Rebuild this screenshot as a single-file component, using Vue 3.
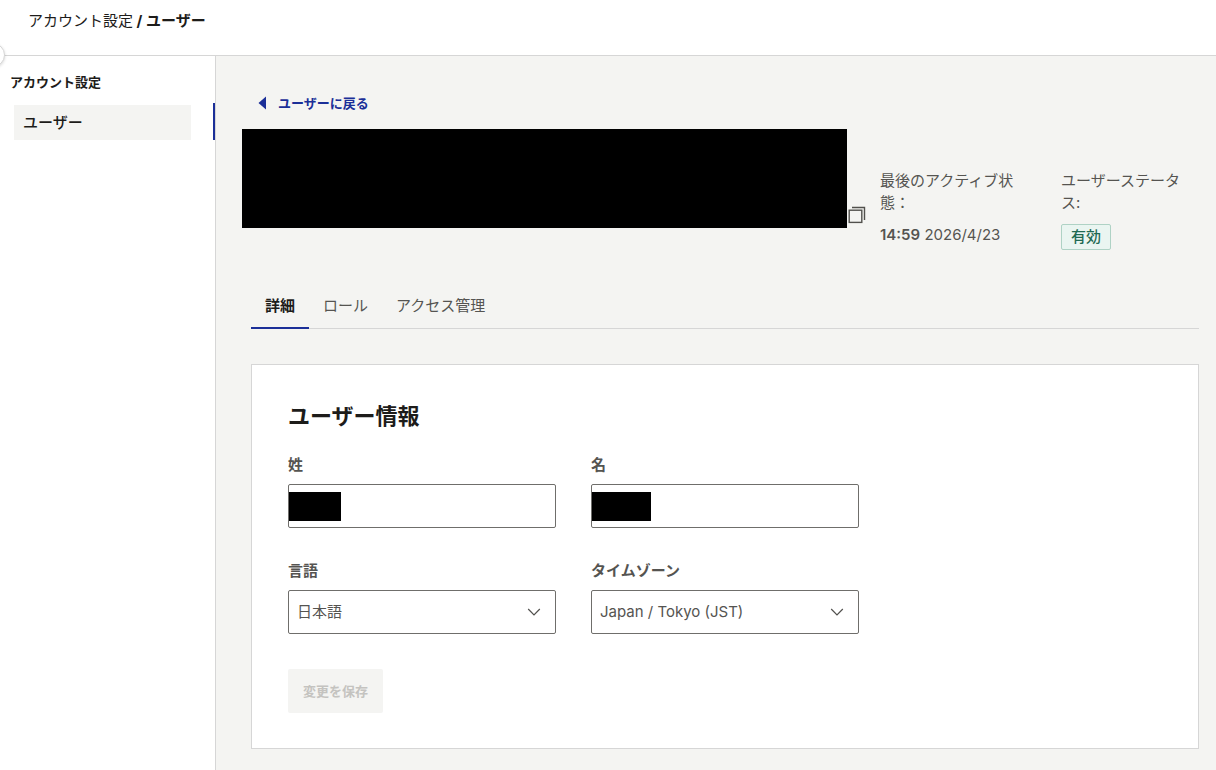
<template>
  <div class="page">
    <header class="topbar">
      <nav class="breadcrumb" aria-label="breadcrumb">
        <a href="#">アカウント設定</a>
        <strong> / ユーザー</strong>
      </nav>
      <button class="collapse" type="button" aria-label="メニュー"></button>
    </header>

    <div class="body">
      <aside class="sidebar">
        <h2 class="sidebar-title">アカウント設定</h2>
        <div class="sidebar-row">
          <a class="sidebar-item" href="#">ユーザー</a>
        </div>
      </aside>

      <main class="main">
        <a class="back" href="#">
          <svg width="8" height="14" viewBox="0 0 8 14">
            <path d="M8 0.5V13.5L0.5 7Z" fill="#1b2f98" />
          </svg>
          ユーザーに戻る
        </a>

        <section class="summary">
          <div class="name-block"></div>
          <button class="copy" type="button" aria-label="コピー">
            <svg width="18" height="18" viewBox="0 0 18 18" fill="none" stroke="#51504d" stroke-width="1.4">
              <rect x="1.2" y="4.2" width="12.6" height="12.2" />
              <path d="M4 1.5H16.5V14" />
            </svg>
          </button>
          <dl class="meta meta-active">
            <dt>最後のアクティブ状態：</dt>
            <dd><b>14:59</b> 2026/4/23</dd>
          </dl>
          <dl class="meta meta-status">
            <dt>ユーザーステータス:</dt>
            <dd><span class="badge">有効</span></dd>
          </dl>
        </section>

        <div class="tabs" role="tablist">
          <button
            v-for="tab in tabs"
            :key="tab"
            type="button"
            role="tab"
            class="tab"
            :class="{ active: tab === activeTab }"
            :aria-selected="tab === activeTab"
            @click="activeTab = tab"
          >{{ tab }}</button>
        </div>

        <form class="card" @submit.prevent>
          <h1>ユーザー情報</h1>
          <div class="fields">
            <div class="field">
              <label for="last-name">姓</label>
              <div class="control">
                <input id="last-name" v-model="lastName" type="text">
                <span class="mask"></span>
              </div>
            </div>
            <div class="field">
              <label for="first-name">名</label>
              <div class="control">
                <input id="first-name" v-model="firstName" type="text">
                <span class="mask mask-wide"></span>
              </div>
            </div>
            <div class="field">
              <label for="language">言語</label>
              <div class="control">
                <select id="language" v-model="language">
                  <option>日本語</option>
                </select>
                <svg class="chevron" width="14" height="8" viewBox="0 0 14 8">
                  <path d="M1.2 1L7 6.8L12.8 1" fill="none" stroke="#51504d" stroke-width="1.2" />
                </svg>
              </div>
            </div>
            <div class="field">
              <label for="timezone">タイムゾーン</label>
              <div class="control">
                <select id="timezone" v-model="timezone">
                  <option>Japan / Tokyo (JST)</option>
                </select>
                <svg class="chevron" width="14" height="8" viewBox="0 0 14 8">
                  <path d="M1.2 1L7 6.8L12.8 1" fill="none" stroke="#51504d" stroke-width="1.2" />
                </svg>
              </div>
            </div>
          </div>
          <button class="save" type="submit" disabled>変更を保存</button>
        </form>
      </main>
    </div>
  </div>
</template>

<script setup>
import { ref } from 'vue'

const tabs = ['詳細', 'ロール', 'アクセス管理']
const activeTab = ref('詳細')

const lastName = ref('')
const firstName = ref('')
const language = ref('日本語')
const timezone = ref('Japan / Tokyo (JST)')
</script>

<style>
body {
  background: #f4f4f2;
}
</style>

<style scoped>
.page {
  min-height: 100vh;
  display: flex;
  flex-direction: column;
  font-family: Inter, "Noto Sans CJK JP", sans-serif;
  font-size: 15px;
  line-height: 22px;
  color: #555451;
}

.page * {
  box-sizing: border-box;
}

a {
  color: inherit;
  text-decoration: none;
}

button,
input,
select {
  font: inherit;
  color: inherit;
}

button {
  border: 0;
  padding: 0;
  background: none;
}

.topbar {
  position: relative;
  height: 56px;
  padding: 10px 28px;
  background: #fff;
  border-bottom: 1px solid #d6d6d6;
  color: #1d1c1a;
}

.collapse {
  position: absolute;
  left: -19px;
  bottom: -12px;
  width: 24px;
  height: 24px;
  border: 1px solid #d6d6d6;
  border-radius: 50%;
  background: #fff;
  box-shadow: 0 1px 3px rgba(0, 0, 0, 0.15);
}

.body {
  flex: 1;
  display: flex;
}

.sidebar {
  flex: none;
  width: 216px;
  padding-top: 15px;
  background: #fff;
  border-right: 1px solid #d6d6d6;
  color: #1d1c1a;
}

.sidebar-title {
  margin: 0 0 10px;
  padding-left: 10px;
  font-size: 13px;
  line-height: 22px;
}

.sidebar-row {
  padding: 2px 22px 0 14px;
  border-right: 2px solid #1b2f98;
}

.sidebar-item {
  display: block;
  padding: 7px 9px 6px;
  background: #f4f4f2;
  font-weight: 500;
}

.main {
  flex: 1;
  min-width: 0;
  padding: 36px 17px 21px 35px;
  background: #f4f4f2;
}

.back {
  display: flex;
  align-items: center;
  gap: 12px;
  width: fit-content;
  padding-left: 7px;
  font-size: 13px;
  font-weight: 700;
  color: #1b2f98;
}

.summary {
  display: flex;
  align-items: flex-start;
  margin-top: 15px;
}

.name-block {
  flex: 1;
  height: 99px;
  margin-left: -9px;
  background: #000;
}

.copy {
  width: 18px;
  height: 18px;
  margin: 77px 14px 0 1px;
}

.copy svg {
  display: block;
}

.meta {
  flex: none;
  margin: 41px 0 0;
}

.meta-active {
  width: 145px;
  margin-right: 36px;
}

.meta-status {
  width: 138px;
  padding-right: 8px;
}

.meta dd {
  margin: 10px 0 0;
}

.meta b {
  font-weight: 600;
}

.badge {
  display: inline-block;
  padding: 1px 9px;
  border: 1px solid #afd2c5;
  border-radius: 2px;
  background: #eaf5f1;
  color: #1f6a53;
  font-weight: 500;
  vertical-align: top;
}

.tabs {
  display: flex;
  margin-top: 35px;
  box-shadow: inset 0 -1px #d6d6d6;
}

.tab {
  height: 44px;
  padding: 0 14px;
  border-bottom: 2px solid transparent;
}

.tab.active {
  border-bottom-color: #1b2f98;
  color: #1d1c1a;
  font-weight: 700;
}

.card {
  margin-top: 35px;
  padding: 35px 36px;
  background: #fff;
  border: 1px solid #d6d6d6;
}

.card h1 {
  margin: 0 0 22px;
  font-size: 22px;
  line-height: 32px;
  color: #1d1c1a;
}

.fields {
  display: grid;
  grid-template-columns: repeat(2, 268px);
  gap: 32px 35px;
}

.field label {
  display: block;
  margin-bottom: 8px;
  font-weight: 700;
}

.control {
  position: relative;
}

.control input,
.control select {
  display: block;
  width: 100%;
  height: 44px;
  margin: 0;
  padding: 0 8px;
  border: 1px solid #6f6e6b;
  border-radius: 2px;
  background: #fff;
  appearance: none;
}

.mask {
  position: absolute;
  top: 8px;
  left: 1px;
  width: 52px;
  height: 29px;
  background: #000;
}

.mask-wide {
  width: 59px;
}

.chevron {
  position: absolute;
  top: 18px;
  right: 15px;
  pointer-events: none;
}

.save {
  height: 44px;
  margin-top: 35px;
  padding: 0 15px;
  border-radius: 2px;
  background: #f4f4f2;
  color: #c4c3c0;
  font-size: 13px;
  font-weight: 700;
}
</style>
